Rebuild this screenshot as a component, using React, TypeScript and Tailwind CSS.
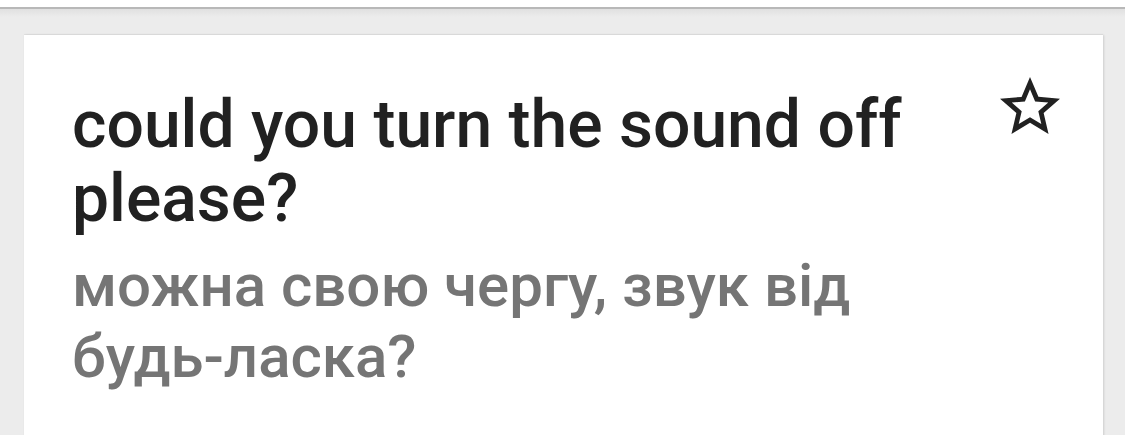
export default function App() {
  return (
    <div className="w-[1125px] h-[435px] bg-[#ececec] overflow-hidden relative" style={{ fontFamily: "Roboto, 'Noto Sans', sans-serif" }}>
      <div className="h-[9px] bg-white border-b-2 border-[#b8b8b8]" />
      <div className="h-[8px] bg-gradient-to-b from-[#e0e0e0] to-[#ececec]" />
      <div className="pt-[18px] pl-[24px] pr-[22px]">
        <div className="bg-white h-[420px] shadow-[1px_0_2px_rgba(0,0,0,0.12),0_-1px_1px_rgba(0,0,0,0.04)] flex pl-[48px] pr-[37px]">
          <div className="flex-1 pt-[53px]">
            <div className="text-[66px] leading-[74px] font-medium text-[#212121]">
              could you turn the sound off
              <br />
              please?
            </div>
            <div className="mt-[14px] text-[60px] leading-[71px] font-medium text-[#757575]">
              можна свою чергу, звук від
              <br />
              будь-ласка?
            </div>
          </div>
          <div className="pt-[36px]">
            <svg width="72" height="72" viewBox="0 0 24 24" fill="#212121">
              <path d="M22 9.24l-7.19-.62L12 2 9.19 8.63 2 9.24l5.46 4.73L5.82 21 12 17.27 18.18 21l-1.63-7.03L22 9.24zM12 15.4l-3.76 2.27 1-4.28-3.32-2.88 4.38-.38L12 6.1l1.71 4.04 4.38.38-3.32 2.88 1 4.28L12 15.4z" />
            </svg>
          </div>
        </div>
      </div>
    </div>
  );
}
